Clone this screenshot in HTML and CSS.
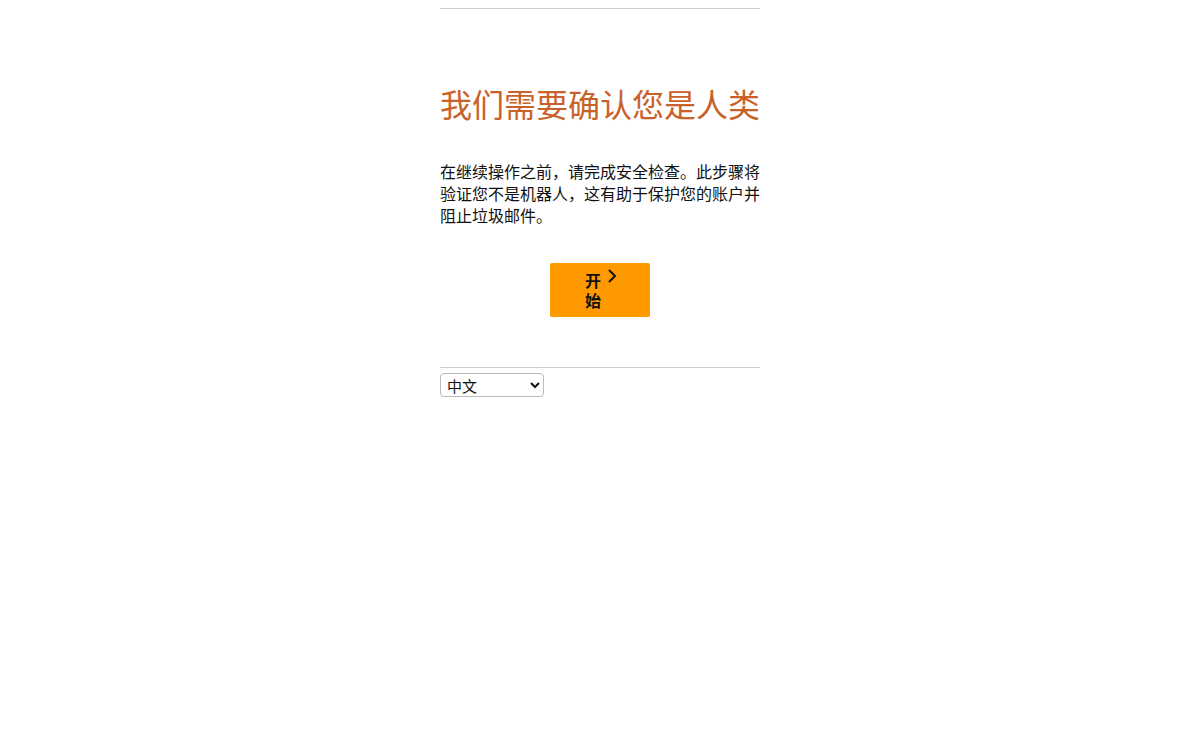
FILE: index.html
```html
<!DOCTYPE html>
<html lang="zh">
<head>
<meta charset="utf-8">
<title>验证</title>
<link rel="stylesheet" href="styles.css">
</head>
<body>
<div class="page">
  <div class="rule"></div>
  <h1 class="title">我们需要确认您是人类</h1>
  <p class="desc">在继续操作之前，请完成安全检查。此步骤将验证您不是机器人，这有助于保护您的账户并阻止垃圾邮件。</p>
  <div class="actions">
    <button class="start" type="button">
      <span class="start-text">开始</span>
      <svg class="chev" width="10" height="16" viewBox="0 0 10 16"><polyline points="2,2 8,8 2,14" fill="none" stroke="#111" stroke-width="2"/></svg>
    </button>
  </div>
  <div class="rule bottom"></div>
  <select class="lang">
    <option>中文</option>
    <option>English</option>
  </select>
</div>
</body>
</html>
```
FILE: styles.css
```css
body {
  margin: 8px;
  background: #fff;
  font-family: "Noto Sans CJK SC", "Liberation Sans", sans-serif;
  color: #111;
}
.page {
  width: 320px;
  margin: 0 auto;
}
.rule {
  height: 1px;
  background: #cfcfcf;
}
.title {
  margin: 74px 0 0;
  font-size: 32px;
  line-height: 40px;
  font-weight: 400;
  color: #c9622a;
  white-space: nowrap;
}
.desc {
  margin: 37px 0 0;
  font-size: 16px;
  line-height: 22px;
}
.actions {
  margin-top: 37px;
  display: flex;
  justify-content: center;
}
.start {
  width: 100px;
  height: 54px;
  background: #ff9900;
  border: none;
  border-radius: 2px;
  padding: 0;
  display: flex;
  justify-content: center;
  align-items: center;
  gap: 6px;
  font-family: "Noto Sans CJK SC", sans-serif;
  font-weight: 700;
  font-size: 16px;
  line-height: 20px;
  color: #111;
  cursor: pointer;
}
.start-text {
  width: 16px;
  margin-left: 2px;
}
.chev {
  align-self: flex-start;
  margin-top: 5px;
}
.bottom {
  margin-top: 50px;
}
.lang {
  margin-top: 5px;
  width: 104px;
  height: 24px;
  font-family: "Noto Sans CJK SC", sans-serif;
  font-size: 15px;
  border: 1px solid #bbb;
  border-radius: 4px;
  background: #fff;
  color: #111;
  padding: 0 2px;
}
```
